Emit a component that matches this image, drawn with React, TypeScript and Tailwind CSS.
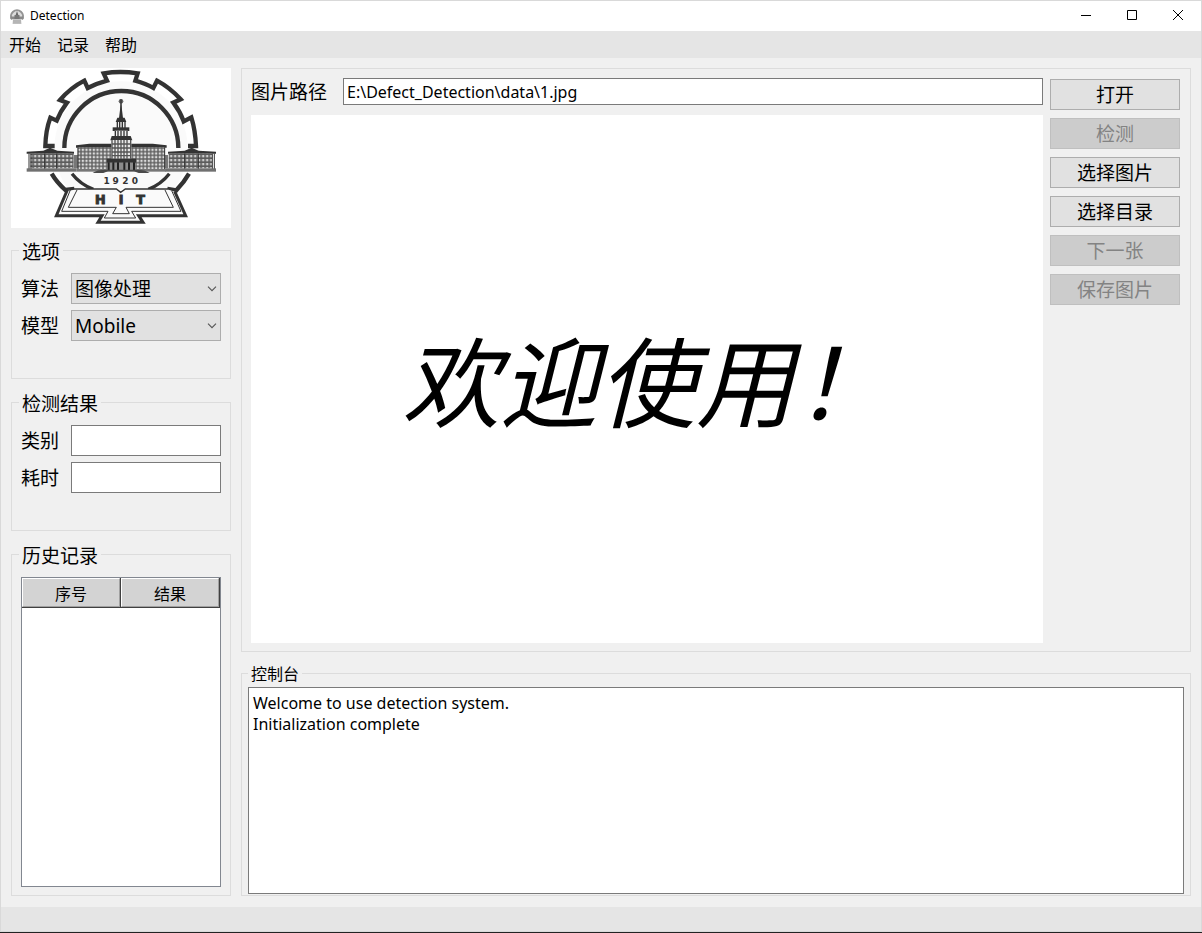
import type { ReactNode } from "react";

const ink = "#333333";

function Crest() {
  const digits = [
    { c: "1", x: 302 },
    { c: "9", x: 329 },
    { c: "2", x: 358 },
    { c: "0", x: 387 },
  ];
  const initials = [
    { c: "H", x: 283 },
    { c: "I", x: 345 },
    { c: "T", x: 404 },
  ];
  return (
    <svg viewBox="15 18 660 480" className="block h-40 w-full bg-white" role="img" aria-label="HIT 1920">
      <defs>
        <pattern id="win" width="11" height="11" patternUnits="userSpaceOnUse" x="214" y="258">
          <rect width="11" height="11" fill="#5c5c5c" />
          <rect x="2" y="2" width="7" height="7" fill="#dcdcdc" />
        </pattern>
        <pattern id="winWing" width="12" height="12" patternUnits="userSpaceOnUse" x="70" y="276">
          <rect width="12" height="12" fill="#5c5c5c" />
          <rect x="2" y="3" width="7" height="7" fill="#cccccc" />
        </pattern>
      </defs>
      <circle cx="345" cy="258" r="200" fill="#fafafa" />
      {/* gear rim */}
      <g fill="none" stroke={ink} strokeWidth="13" strokeLinejoin="miter">
        <path d="M146 252H118Q119 205 133 167L152 176Q163 148 183 122L162 114Q194 77 235 56L245 78Q270 65 303 56L293 34Q343 26 395 34L388 56Q420 65 442 78L453 56Q492 77 524 112L502 122Q522 148 533 178L556 166Q568 205 570 252H546" />
        <path d="M175 258A171 171 0 0 1 517 258" />
        <path d="M137 335Q152 361 178 384L205 381" />
        <path d="M549 335Q534 361 511 385L484 381" />
        <path d="M198 335Q222 366 262 382" strokeWidth="10" />
        <path d="M490 335Q466 366 427 382" strokeWidth="10" />
      </g>
      {/* side wings */}
      <g>
        <path d="M62 269L112 266L132 257L154 266L204 269V275H62Z" fill={ink} />
        <rect x="73" y="275" width="130" height="44" fill="url(#winWing)" />
        <path d="M630 269L578 266L557 257L536 266L486 269V275H630Z" fill={ink} />
        <rect x="488" y="275" width="130" height="44" fill="url(#winWing)" />
        <rect x="62" y="319" width="150" height="10" fill="#707070" />
        <rect x="478" y="319" width="152" height="10" fill="#707070" />
        <path d="M69 275V320M75 275V320M619 275V320M625 275V320M116 275V320M152 275V320M536 275V320M577 275V320" stroke={ink} strokeWidth="3" />
        <rect x="204" y="279" width="12" height="40" fill="#777777" />
        <rect x="474" y="279" width="12" height="40" fill="#777777" />
      </g>
      {/* main block */}
      <path d="M210 250L250 245H440L482 250V257H210Z" fill={ink} />
      <rect x="215" y="256" width="262" height="66" fill="url(#win)" />
      <path d="M216 256V322M476 256V322" stroke={ink} strokeWidth="3" />
      <rect x="212" y="321" width="268" height="8" fill="#777777" />
      {/* tower */}
      <circle cx="345" cy="118" r="7" fill="#666666" />
      <path d="M345 120L339 168H351Z" fill={ink} />
      <path d="M345 112V170" stroke={ink} strokeWidth="4" />
      <path d="M334 167H356L361 180H329Z" fill={ink} />
      <rect x="332" y="180" width="27" height="17" fill="#eeeeee" />
      <path d="M334 180V198M341 180V198M349 180V198M357 180V198" stroke={ink} strokeWidth="4" />
      <path d="M320 196H370V207H320Z" fill={ink} />
      <rect x="326" y="206" width="39" height="18" fill="#eeeeee" />
      <path d="M328 206V224M336 206V224M345 206V224M354 206V224M363 206V224" stroke={ink} strokeWidth="4" />
      <path d="M317 222H374L379 235H313Z" fill={ink} />
      <rect x="316" y="234" width="60" height="56" fill="#e8e8e8" />
      <path d="M318 234V290M327 234V290M336 234V290M345 234V290M354 234V290M363 234V290M374 234V290M316 246H376M316 258H376M316 270H376M316 281H376" stroke="#555555" strokeWidth="4" />
      <path d="M302 290H390V302H302Z" fill={ink} />
      <rect x="304" y="302" width="84" height="24" fill="#8b8b8b" />
      <path d="M308 301V326M322 301V326M336 301V326M355 301V326M369 301V326M384 301V326" stroke="#222222" strokeWidth="6" />
      <path d="M260 333Q270 323 303 323H388Q420 323 431 333H398L384 328H306L292 333Z" fill="#4a4a4a" />
      {/* year */}
      <g fill={ink} fontFamily="DejaVu Sans, sans-serif" fontSize="27" fontWeight="700" textAnchor="middle">
        {digits.map((d) => (
          <text key={d.c} x={d.x} y="366">{d.c}</text>
        ))}
      </g>
      {/* open book */}
      <path d="M184 384L148 463H284L273 483H414L402 464H542L505 386L488 381H358L344 391L331 381H205Z" fill="#fafafa" />
      <g fill="none" stroke={ink}>
        <path d="M184 384L151 461H288L276 481H411L398 461H539L506 388" strokeWidth="9" />
        <path d="M193 384L167 448H306L295 468H389L377 448H525L497 386" strokeWidth="3" />
        <path d="M213 384L187 436H331L320 455H370L360 436H502L477 384" strokeWidth="3" />
        <path d="M178 386L205 381H331L344 391L358 381H488L511 388" strokeWidth="4" />
      </g>
      <g fill={ink} stroke={ink} strokeWidth="3" fontFamily="DejaVu Sans, sans-serif" fontSize="38" fontWeight="700" textAnchor="middle">
        {initials.map((d) => (
          <text key={d.c} x={d.x} y="426">{d.c}</text>
        ))}
      </g>
    </svg>
  );
}

function AppIcon() {
  return (
    <svg viewBox="0 0 16 16" className="size-4 shrink-0" aria-hidden="true">
      <path d="M3 11.500A6 6 0 1 1 13 11.500" fill="#dcdcdc" stroke="#949494" strokeWidth="2" />
      <path d="M8 3L6.500 7.500H9.500Z" fill="#666" />
      <path d="M1.500 8.500H14.500V11H1.500Z" fill="#8a8a8a" />
      <path d="M5.500 7H10.500V11H5.500Z" fill="#777" />
      <path d="M4 11H12L12.500 16H3.500Z" fill="#c8c8c8" />
      <path d="M5 12V15.500M7 12V15.500M9 12V15.500M11 12V15.500" stroke="#a2a2a2" />
    </svg>
  );
}

function Group({ title, className, children }: { title: string; className: string; children: ReactNode }) {
  return (
    <fieldset className={`min-w-0 border border-[#dcdcdc] px-[9px] ${className}`}>
      <legend className="-ml-0.5 h-[25px] px-[3px] text-[19px] leading-[28px]">{title}</legend>
      {children}
    </fieldset>
  );
}

function Picker({ id, label, options }: { id: string; label: string; options: string[] }) {
  return (
    <div className="flex items-center">
      <label htmlFor={id} className="w-[50px] shrink-0 pt-0.5 text-[19px] leading-[25px]">{label}</label>
      <div className="relative min-w-0 flex-1">
        <select id={id} className="block h-[31px] w-full appearance-none border border-[#adadad] bg-[#e1e1e1] pl-[3px] pt-0.5 text-[19px] leading-[25px] outline-none">
          {options.map((o) => (
            <option key={o}>{o}</option>
          ))}
        </select>
        <svg viewBox="0 0 10 6" className="pointer-events-none absolute right-1 top-[13px] h-1.5 w-2.5" aria-hidden="true">
          <path d="M1 .7L5 4.700L9 .7" fill="none" stroke="#555" strokeWidth="1.100" />
        </svg>
      </div>
    </div>
  );
}

function Result({ id, label }: { id: string; label: string }) {
  return (
    <div className="flex items-center">
      <label htmlFor={id} className="w-[50px] shrink-0 pt-0.5 text-[19px] leading-[25px]">{label}</label>
      <input id={id} className="h-[31px] min-w-0 flex-1 border border-[#7a7a7a] bg-white px-1 text-[19px] outline-none" />
    </div>
  );
}

const actions = [
  { label: "打开", disabled: false },
  { label: "检测", disabled: true },
  { label: "选择图片", disabled: false },
  { label: "选择目录", disabled: false },
  { label: "下一张", disabled: true },
  { label: "保存图片", disabled: true },
];

export default function App() {
  return (
    <div className="flex min-h-screen flex-col border-b border-[#222] bg-[#f0f0f0] font-['Noto_Sans','Noto_Sans_CJK_SC',sans-serif] text-black">
      <div className="flex flex-1 flex-col border border-[#d9d9d9]">
        <header className="flex h-[30px] items-center bg-white pl-2">
          <AppIcon />
          <h1 className="ml-[5px] flex-1 text-xs">Detection</h1>
          <button aria-label="Minimize" className="flex h-full w-[46px] items-center justify-center">
            <svg viewBox="0 0 12 12" className="size-3" aria-hidden="true"><path d="M1 5.500H11" stroke="#000" /></svg>
          </button>
          <button aria-label="Maximize" className="flex h-full w-[46px] items-center justify-center">
            <svg viewBox="0 0 12 12" className="size-3" aria-hidden="true"><path d="M1.500 .5H10.500V9.500H1.500Z" fill="none" stroke="#000" /></svg>
          </button>
          <button aria-label="Close" className="flex h-full w-[46px] items-center justify-center">
            <svg viewBox="0 0 12 12" className="size-3" aria-hidden="true"><path d="M1 0L11 10M11 0L1 10" stroke="#000" /></svg>
          </button>
        </header>

        <nav className="flex h-[27px] items-center bg-[#e5e5e5]">
          {["开始", "记录", "帮助"].map((m) => (
            <button key={m} className="px-2 text-base">{m}</button>
          ))}
        </nav>

        <main className="flex flex-1 gap-2.5 px-2.5 pb-[11px] pt-2.5">
          <aside className="flex w-[220px] shrink-0 flex-col">
            <Crest />
            <Group title="选项" className="mt-2.5 h-[141px]">
              <div className="flex flex-col gap-1.5 pt-2.5">
                <Picker id="algorithm" label="算法" options={["图像处理"]} />
                <Picker id="model" label="模型" options={["Mobile"]} />
              </div>
            </Group>
            <Group title="检测结果" className="mt-[11px] h-[141px]">
              <div className="flex flex-col gap-1.5 pt-2.5">
                <Result id="category" label="类别" />
                <Result id="elapsed" label="耗时" />
              </div>
            </Group>
            <Group title="历史记录" className="mt-[11px] flex flex-1 flex-col pb-2">
              <div className="mt-2.5 min-h-[310px] flex-1 border border-[#828790] bg-white">
                <table className="w-full table-fixed border-collapse">
                  <thead>
                    <tr>
                      {["序号", "结果"].map((h) => (
                        <th key={h} scope="col" className="p-0 font-normal">
                          <div className="border-b border-r border-[#404040]">
                            <div className="h-[29px] border border-b-[#a0a0a0] border-l-white border-r-[#a0a0a0] border-t-white bg-[#d3d3d3] pt-[3px] text-base">{h}</div>
                          </div>
                        </th>
                      ))}
                    </tr>
                  </thead>
                  <tbody />
                </table>
              </div>
            </Group>
          </aside>

          <div className="flex min-w-0 flex-1 flex-col">
            <section className="flex flex-1 gap-[7px] border border-[#dcdcdc] py-2 pl-[9px] pr-2.5">
              <div className="flex min-w-0 flex-1 flex-col gap-2.5 pt-px">
                <div className="flex items-center">
                  <label htmlFor="path" className="w-[92px] shrink-0 pt-0.5 text-[19px] leading-[25px]">图片路径</label>
                  <input id="path" defaultValue="E:\Defect_Detection\data\1.jpg" className="h-[27px] min-w-0 flex-1 border border-[#7a7a7a] bg-white px-[3px] text-base outline-none" />
                </div>
                <div className="flex flex-1 items-center justify-center bg-white">
                  <p className="whitespace-nowrap pt-1.5 text-[98px] italic leading-none">欢迎使用！</p>
                </div>
              </div>
              <div className="flex w-[130px] shrink-0 flex-col gap-2 pt-0.5">
                {actions.map((a) => (
                  <button
                    key={a.label}
                    disabled={a.disabled}
                    className="h-[31px] border border-[#adadad] bg-[#e1e1e1] pt-0.5 text-[19px] leading-[25px] disabled:border-[#bfbfbf] disabled:bg-[#cccccc] disabled:text-[#838383]"
                  >
                    {a.label}
                  </button>
                ))}
              </div>
            </section>

            <fieldset className="mt-[11px] min-w-0 border border-[#dcdcdc] px-1.5 pb-px">
              <legend className="h-[21px] px-[3px] text-base leading-[23px]">
                <label htmlFor="console">控制台</label>
              </legend>
              <textarea
                id="console"
                readOnly
                defaultValue={"Welcome to use detection system.\nInitialization complete"}
                className="mt-[3px] block h-[207px] w-full resize-none border border-[#7a7a7a] bg-white px-1 py-[5px] text-base leading-[21px] outline-none"
              />
            </fieldset>
          </div>
        </main>

        <footer className="h-6 bg-[#e5e5e5]" />
      </div>
    </div>
  );
}
